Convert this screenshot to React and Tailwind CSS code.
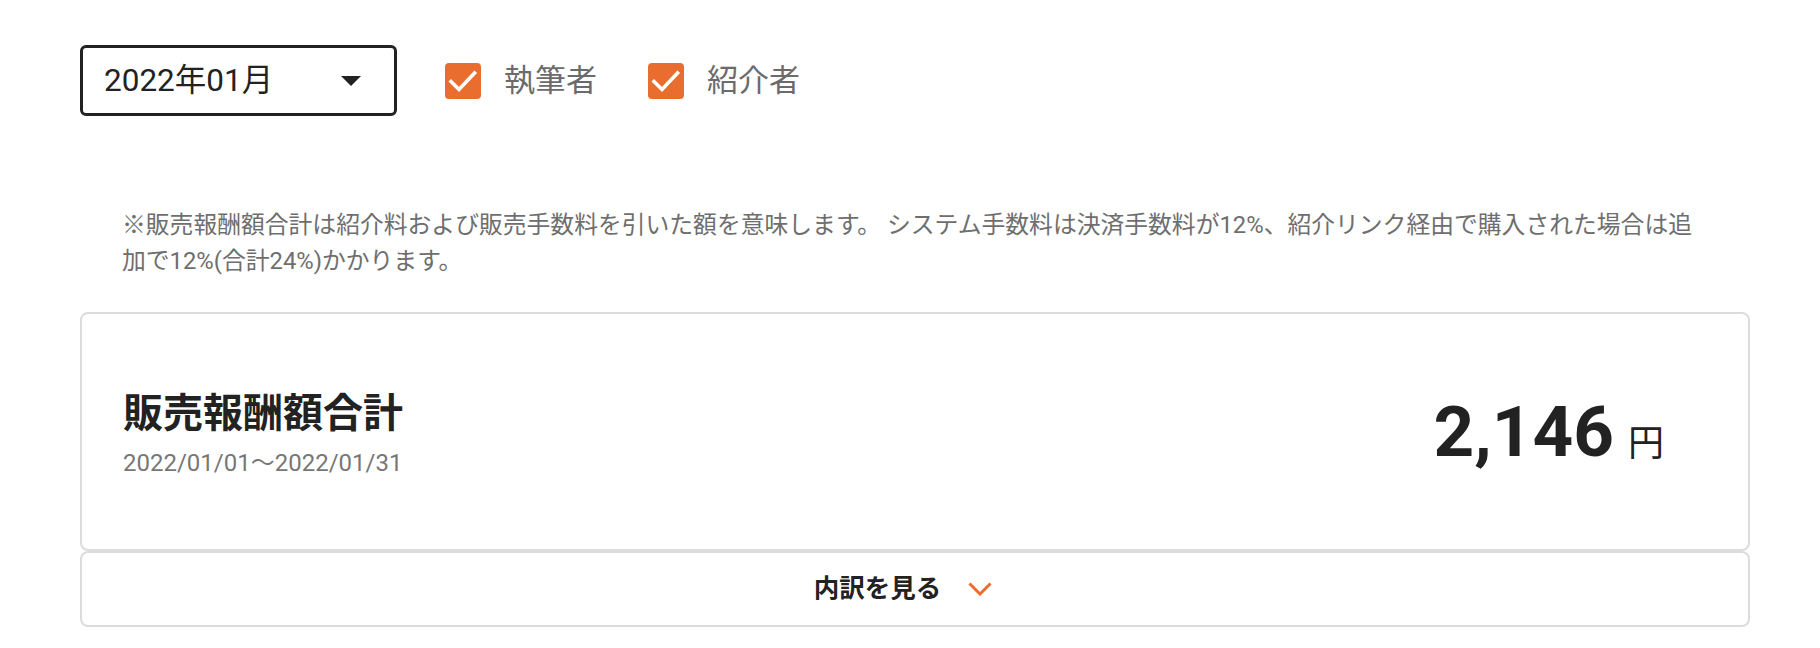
import { useState } from 'react';

const font = 'font-[Roboto,"Noto_Sans_CJK_JP",sans-serif]';

function Check({ checked, label, onToggle }) {
  return (
    <label className="flex items-center gap-[23px] cursor-pointer select-none" onClick={onToggle}>
      <span className={`w-[36px] h-[36px] rounded-[4px] flex items-center justify-center ${checked ? 'bg-[#e96d2e]' : 'border-2 border-[#999] bg-white'}`}>
        {checked && (
          <svg width="36" height="36" viewBox="0 0 36 36" fill="none">
            <path d="M6 18.5l8 8L29.5 10" stroke="#fff" strokeWidth="3.6" strokeLinecap="square" />
          </svg>
        )}
      </span>
      <span className="text-[31px] leading-none text-[#6b6b6b]">{label}</span>
    </label>
  );
}

export default function App() {
  const [writer, setWriter] = useState(true);
  const [referrer, setReferrer] = useState(true);
  const [open, setOpen] = useState(false);

  return (
    <div className={`${font} bg-white min-h-[648px] pt-[45px] pl-[80px] pr-[70px] text-[#222]`}>
      <div className="flex items-center">
        <div className="w-[317px] h-[71px] border-[3px] border-[#222] rounded-[6px] flex items-center justify-between pl-[21px] pr-[33px]">
          <span className="text-[31.5px] leading-none text-[#222]">2022年01月</span>
          <svg width="20" height="10" viewBox="0 0 20 10"><path d="M0 0h20L10 10z" fill="#222" /></svg>
        </div>
        <div className="flex items-center gap-[51px] ml-[48px]">
          <Check checked={writer} label="執筆者" onToggle={() => setWriter(!writer)} />
          <Check checked={referrer} label="紹介者" onToggle={() => setReferrer(!referrer)} />
        </div>
      </div>

      <p className="mt-[91px] px-[42px] text-[23.8px] leading-[36px] text-[#6e6e6e]">
        ※販売報酬額合計は紹介料および販売手数料を引いた額を意味します。 システム手数料は決済手数料が12%、紹介リンク経由で購入された場合は追加で12%(合計24%)かかります。
      </p>

      <div className="mt-[33px] h-[239px] border-2 border-[#dcdcdc] rounded-[8px] flex items-center justify-between pl-[41px] pr-[84px]">
        <div className="pt-[7px]">
          <h2 className="text-[40px] leading-[48px] font-bold text-[#222]">販売報酬額合計</h2>
          <p className="mt-[7px] text-[24px] leading-[36px] text-[#777]">2022/01/01〜2022/01/31</p>
        </div>
        <div className="flex items-baseline">
          <span className="text-[71px] leading-none font-bold text-[#222]">2,146</span>
          <span className="ml-[14px] text-[36px] leading-none text-[#222]">円</span>
        </div>
      </div>

      <button
        onClick={() => setOpen(!open)}
        className="w-full h-[76px] border-2 border-[#dcdcdc] rounded-[8px] flex items-center justify-center gap-[27px] pr-[24px]"
      >
        <span className="text-[25.5px] leading-none font-bold text-[#222]">内訳を見る</span>
        <svg width="24" height="14" viewBox="0 0 24 14" fill="none" className={open ? 'rotate-180' : ''}>
          <path d="M1.5 1.5L12 12L22.5 1.5" stroke="#e96d2e" strokeWidth="3" />
        </svg>
      </button>
    </div>
  );
}
